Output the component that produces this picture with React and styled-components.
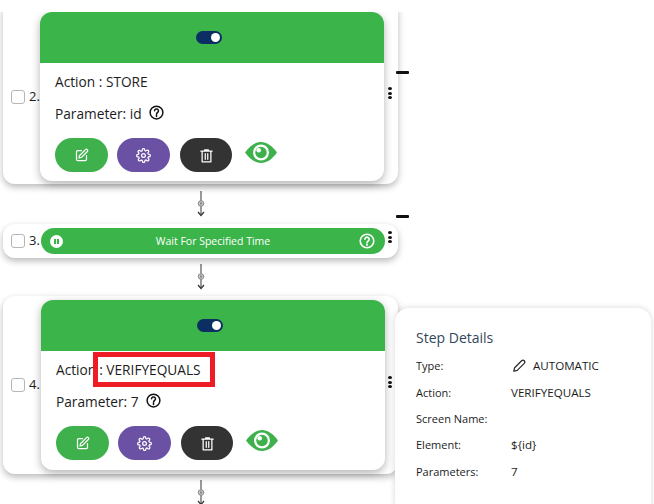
import React from 'react'
import styled, { createGlobalStyle } from 'styled-components'

const GREEN = '#3bb54a'

const Global = createGlobalStyle`
html, body {
    margin: 0;
    padding: 0;
    background: #ffffff;
    overflow: hidden;
}
body {
    font-family: "Open Sans", "Liberation Sans", sans-serif;
    color: #1c1c1c;
}
`
const Page = styled.div`
    position: relative;
    width: 654px;
    height: 504px;
    overflow: hidden;
    padding-left: 3px;
    box-sizing: border-box;
`
const Flow = styled.div`
    width: 395px;
    display: flex;
    flex-direction: column;
`
const StepRow = styled.div`
    position: relative;
    display: flex;
    align-items: flex-start;
    height: ${p => p.$height}px;
    background: #ffffff;
    border-radius: 12px;
    box-shadow: 0 3px 7px rgba(0, 0, 0, 0.28);
    padding: ${p => p.$cut ? p.$cut : 4}px 0 0 8px;
    box-sizing: border-box;
    /* the first step is scrolled under the top of the canvas */
    clip-path: ${p => p.$cut ? `inset(${p.$cut}px -14px -14px -14px)` : 'none'};
`
const Check = styled.span`
    width: 14px;
    height: 14px;
    margin-top: ${p => p.$top}px;
    border: 1px solid #b5b5b5;
    border-radius: 3px;
    background: #ffffff;
    box-sizing: border-box;
    flex: none;
`
const Num = styled.span`
    width: 11px;
    margin: ${p => p.$top}px 0 0 4px;
    font-size: 13px;
    line-height: 18px;
    white-space: nowrap;
    flex: none;
    overflow: hidden;
`
const Card = styled.div`
    width: 344px;
    height: ${p => p.$height}px;
    margin-left: ${p => p.$shift}px;
    background: #ffffff;
    border-radius: 12px;
    box-shadow: 0 3px 8px rgba(0, 0, 0, 0.3);
    flex: none;
    display: flex;
    flex-direction: column;
`
const CardHead = styled.div`
    height: 51px;
    padding-right: 6px;
    box-sizing: border-box;
    background: ${GREEN};
    border-radius: 12px 12px 0 0;
    display: flex;
    align-items: center;
    justify-content: center;
    flex: none;
`
const Toggle = styled.span`
    position: relative;
    width: 26px;
    height: 13px;
    border-radius: 7px;
    background: #0b2f63;
    &::after {
        content: "";
        position: absolute;
        right: 2px;
        top: 2px;
        width: 9px;
        height: 9px;
        border-radius: 50%;
        background: #ffffff;
    }
`
const CardBody = styled.div`
    padding: 9px 15px 0;
    display: flex;
    flex-direction: column;
`
const Line = styled.div`
    display: flex;
    align-items: center;
    height: 20px;
    margin-bottom: 12px;
    font-size: 13.7px;
    line-height: 20px;
    white-space: nowrap;
    svg {
        width: 15px;
        height: 15px;
        margin-top: -3px;
    }
`
const Help = styled.svg`
    width: 16px;
    height: 16px;
    margin-left: 7px;
    flex: none;
    fill: none;
    stroke: ${p => p.$color || '#111111'};
    stroke-width: 1.6;
`
const Marked = styled.span`
    position: relative;
    margin-left: 3px;
    &::before {
        content: "";
        position: absolute;
        left: -6px;
        top: -8px;
        width: 122px;
        height: 35px;
        border: 5px solid #ee1c25;
        box-sizing: border-box;
    }
`
const Actions = styled.div`
    display: flex;
    align-items: flex-start;
    gap: 9px;
    margin-top: 2px;
`
const Pill = styled.button`
    width: ${p => p.$w || 53}px;
    height: 34px;
    margin-left: ${p => p.$nudge || 0}px;
    border: none;
    border-radius: 17px;
    background: ${p => p.$bg};
    padding: 0;
    display: flex;
    align-items: center;
    justify-content: center;
    color: #ffffff;
    svg {
        width: 15px;
        height: 15px;
        fill: none;
        stroke: currentColor;
        stroke-width: 2;
        stroke-linecap: round;
        stroke-linejoin: round;
    }
`
const Eye = styled.svg`
    width: 32px;
    height: 21px;
    margin: 4px 0 0 4px;
    flex: none;
`
const Kebab = styled.span`
    position: absolute;
    left: 388px;
    top: ${p => p.$top}px;
    display: flex;
    flex-direction: column;
    gap: 1.5px;
    i {
        width: 4px;
        height: 3px;
        border-radius: 50%;
        background: #111111;
    }
`
const Dash = styled.span`
    position: absolute;
    left: 396px;
    top: ${p => p.$top}px;
    width: 13px;
    height: 3px;
    border-radius: 1px;
    background: #111111;
`
const WaitBar = styled.div`
    width: 344px;
    height: 26px;
    margin-left: 1px;
    background: ${GREEN};
    border-radius: 13px;
    color: #ffffff;
    display: flex;
    align-items: center;
    padding: 0 10px 0 9px;
    box-sizing: border-box;
    flex: none;
`
const PauseDot = styled.span`
    width: 13px;
    height: 13px;
    border-radius: 50%;
    background: #ffffff;
    flex: none;
    display: flex;
    align-items: center;
    justify-content: center;
    gap: 1.5px;
    i {
        width: 1.5px;
        height: 5px;
        background: ${GREEN};
    }
`
const WaitText = styled.span`
    flex: 1;
    text-align: center;
    font-size: 10.5px;
    line-height: 16px;
    padding-left: 11px;
`
const Connector = styled.svg`
    display: block;
    width: 16px;
    height: ${p => p.$height}px;
    margin: ${p => p.$before}px 0 ${p => p.$after}px 190px;
    flex: none;
`
const DetailPanel = styled.aside`
    position: absolute;
    left: 395px;
    top: 308px;
    width: 256px;
    height: 210px;
    background: #ffffff;
    border-radius: 14px;
    box-shadow: 0 0 6px rgba(0, 0, 0, 0.16);
    padding: 20px 21px;
    box-sizing: border-box;
`
const DetailTitle = styled.div`
    font-size: 14px;
    line-height: 20px;
    color: #33475b;
    margin-bottom: 5px;
`
const DetailRow = styled.div`
    display: grid;
    grid-template-columns: 95px 1fr;
    height: 26.4px;
    align-items: center;
    font-size: 11px;
    line-height: 16px;
`
const DetailValue = styled.span`
    display: flex;
    align-items: center;
    gap: 7px;
    font-size: 11.6px;
    white-space: nowrap;
    svg {
        width: 14px;
        height: 14px;
        margin-left: 1px;
        fill: none;
        stroke: #222222;
        stroke-width: 1.3;
        stroke-linejoin: round;
    }
`

const QuestionIcon = ({ color }) => (
    <Help viewBox="0 0 16 16" $color={color}>
        <circle cx="8" cy="8" r="6.8" />
        <path d="M5.9 6.2a2.1 2.1 0 1 1 3.3 1.8c-.8.5-1.2 1-1.2 1.8" strokeLinecap="round" />
        <path d="M8 11.3v1" strokeLinecap="round" />
    </Help>
)

const ActionButtons = () => (
    <Actions>
        <Pill $bg="#3fb14c">
            <svg viewBox="0 0 24 24">
                <path d="M12 4H6a2 2 0 0 0-2 2v12a2 2 0 0 0 2 2h12a2 2 0 0 0 2-2v-6" />
                <path d="M18.4 2.6a2 2 0 0 1 3 3L12 15l-4 1 1-4z" />
            </svg>
        </Pill>
        <Pill $bg="#6a51a3">
            <svg viewBox="0 0 24 24">
                <circle cx="12" cy="12" r="3" />
                <path d="M19.4 15a1.6 1.6 0 0 0 .3 1.8l.1.1a2 2 0 1 1-2.8 2.8l-.1-.1a1.6 1.6 0 0 0-2.7 1.1v.3a2 2 0 0 1-4 0v-.1a1.6 1.6 0 0 0-2.8-1.1l-.1.1a2 2 0 1 1-2.8-2.8l.1-.1a1.6 1.6 0 0 0-1.1-2.7H3a2 2 0 0 1 0-4h.1a1.6 1.6 0 0 0 1.1-2.8l-.1-.1a2 2 0 1 1 2.8-2.8l.1.1a1.6 1.6 0 0 0 1.8.3H9a1.6 1.6 0 0 0 1-1.5V3a2 2 0 0 1 4 0v.1a1.6 1.6 0 0 0 2.7 1.1l.1-.1a2 2 0 1 1 2.8 2.8l-.1.1a1.6 1.6 0 0 0-.3 1.8V9a1.6 1.6 0 0 0 1.5 1h.3a2 2 0 0 1 0 4h-.1a1.6 1.6 0 0 0-1.5 1z" />
            </svg>
        </Pill>
        <Pill $bg="#333333" $w={52} $nudge={1}>
            <svg viewBox="0 0 24 24">
                <path d="M3 5h18M9 5V3h6v2M5 5h14v17H5zM10 9v9M14 9v9" />
            </svg>
        </Pill>
        <Eye viewBox="0 0 32 21">
            <path d="M0 10.500C5 3.500 10.500 0 16 0s11 3.500 16 10.500c-5 7-10.500 10.500-16 10.500S5 17.500 0 10.500z" fill="#3fb14c" />
            <circle cx="16" cy="10.500" r="8" fill="#ffffff" />
            <circle cx="16" cy="10.500" r="5.700" fill="#3fb14c" />
            <circle cx="13.700" cy="8.300" r="2.300" fill="#ffffff" />
        </Eye>
    </Actions>
)

const FlowArrow = ({ height, before, after }) => (
    <Connector viewBox={`0 0 16 ${height}`} $height={height} $before={before} $after={after}>
        <path d={`M8 0V${height - 2}`} stroke="#555555" strokeWidth="1.2" fill="none" />
        <circle cx="8" cy="12.500" r="2.800" fill="#c4c4c4" stroke="#8a8a8a" strokeWidth="1" />
        <circle cx="8" cy="12.500" r="1" fill="#777777" />
        <path d={`M5 ${height - 5}L8 ${height - 1.500}L11 ${height - 5}`} stroke="#333333" strokeWidth="1.200" fill="none" />
    </Connector>
)

const Details = [
    ['Type:', 'AUTOMATIC', true],
    ['Action:', 'VERIFYEQUALS'],
    ['Screen Name:', ''],
    ['Element:', '${id}'],
    ['Parameters:', '7'],
]

export default function App() {
    return (
        <Page>
            <Global />
            <Flow>
                <StepRow $height={184} $cut={12}>
                    <Check $top={78} />
                    <Num $top={75}>2.</Num>
                    <Card $height={169} $shift={0}>
                        <CardHead><Toggle /></CardHead>
                        <CardBody>
                            <Line>Action : STORE</Line>
                            <Line>Parameter: id<QuestionIcon /></Line>
                            <ActionButtons />
                        </CardBody>
                    </Card>
                </StepRow>
                <FlowArrow height={26} before={7} after={7} />
                <StepRow $height={34}>
                    <Check $top={6} />
                    <Num $top={3}>3.</Num>
                    <WaitBar>
                        <PauseDot><i /><i /></PauseDot>
                        <WaitText>Wait For Specified Time</WaitText>
                        <QuestionIcon color="#ffffff" />
                    </WaitBar>
                </StepRow>
                <FlowArrow height={26} before={6} after={6} />
                <StepRow $height={178}>
                    <Check $top={78} />
                    <Num $top={75}>4.</Num>
                    <Card $height={170} $shift={1}>
                        <CardHead><Toggle /></CardHead>
                        <CardBody>
                            <Line>Action<Marked> : VERIFYEQUALS</Marked></Line>
                            <Line>Parameter: 7<QuestionIcon /></Line>
                            <ActionButtons />
                        </CardBody>
                    </Card>
                </StepRow>
                <FlowArrow height={26} before={6} after={0} />
            </Flow>
            <Kebab $top={87}><i /><i /><i /></Kebab>
            <Kebab $top={231}><i /><i /><i /></Kebab>
            <Kebab $top={376}><i /><i /><i /></Kebab>
            <Dash $top={71} />
            <Dash $top={215} />
            <DetailPanel>
                <DetailTitle>Step Details</DetailTitle>
                {Details.map(([label, value, pencil]) => (
                    <DetailRow key={label}>
                        <span>{label}</span>
                        <DetailValue>
                            {pencil && (
                                <svg viewBox="0 0 16 16">
                                    <path d="M2 14l1-4 8-8a1.800 1.800 0 0 1 3 3l-8 8z" />
                                </svg>
                            )}
                            {value}
                        </DetailValue>
                    </DetailRow>
                ))}
            </DetailPanel>
        </Page>
    )
}
